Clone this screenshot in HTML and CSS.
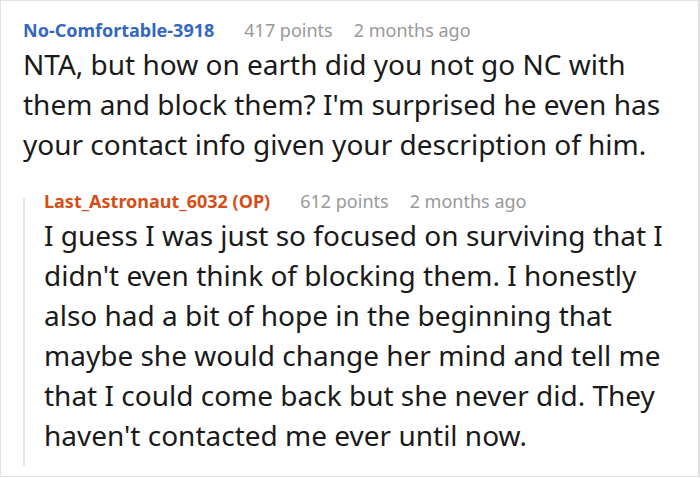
FILE: index.html
```html
<!DOCTYPE html>
<html>
<head>
<meta charset="utf-8">
<link rel="stylesheet" href="styles.css">
</head>
<body>
<div class="frame">
  <div class="comment">
    <div class="meta">
      <span class="author author-blue">No-Comfortable-3918</span>
      <span class="points">417 points</span>
      <span class="time">2 months ago</span>
    </div>
    <p class="text">NTA, but how on earth did you not go NC with them and block them? I'm surprised he even has your contact info given your description of him.</p>
    <div class="reply">
      <div class="meta meta-reply">
        <span class="author author-op">Last_Astronaut_6032 (OP)</span>
        <span class="points">612 points</span>
        <span class="time">2 months ago</span>
      </div>
      <p class="text">I guess I was just so focused on surviving that I didn't even think of blocking them. I honestly also had a bit of hope in the beginning that maybe she would change her mind and tell me that I could come back but she never did. They haven't contacted me ever until now.</p>
    </div>
  </div>
</div>
</body>
</html>
```

FILE: styles.css
```css
html, body {
  margin: 0;
  padding: 0;
  background: #ffffff;
}

.frame {
  box-sizing: border-box;
  width: 700px;
  height: 477px;
  border: 1px solid #e2e2e2;
  border-right-width: 2px;
  padding: 15px 15px 0 22px;
  overflow: hidden;
  font-family: "Noto Sans", "Open Sans", sans-serif;
}

.meta {
  display: flex;
  font-size: 18px;
  line-height: 28px;
  white-space: nowrap;
}

.author {
  font-weight: 700;
  margin-right: 30px;
}

.author-blue {
  color: #3467bd;
}

.author-op {
  color: #d64e16;
}

.points,
.time {
  color: #999999;
}

.points {
  margin-right: 21px;
}

.text {
  margin: 0;
  font-size: 28px;
  line-height: 40px;
  color: #1a1a1a;
}

.reply {
  display: flow-root;
  margin-top: 34px;
  border-left: 2px solid #e6e6e6;
  padding-left: 19px;
  padding-bottom: 11px;
}

.meta-reply {
  margin-top: -11px;
}
```
